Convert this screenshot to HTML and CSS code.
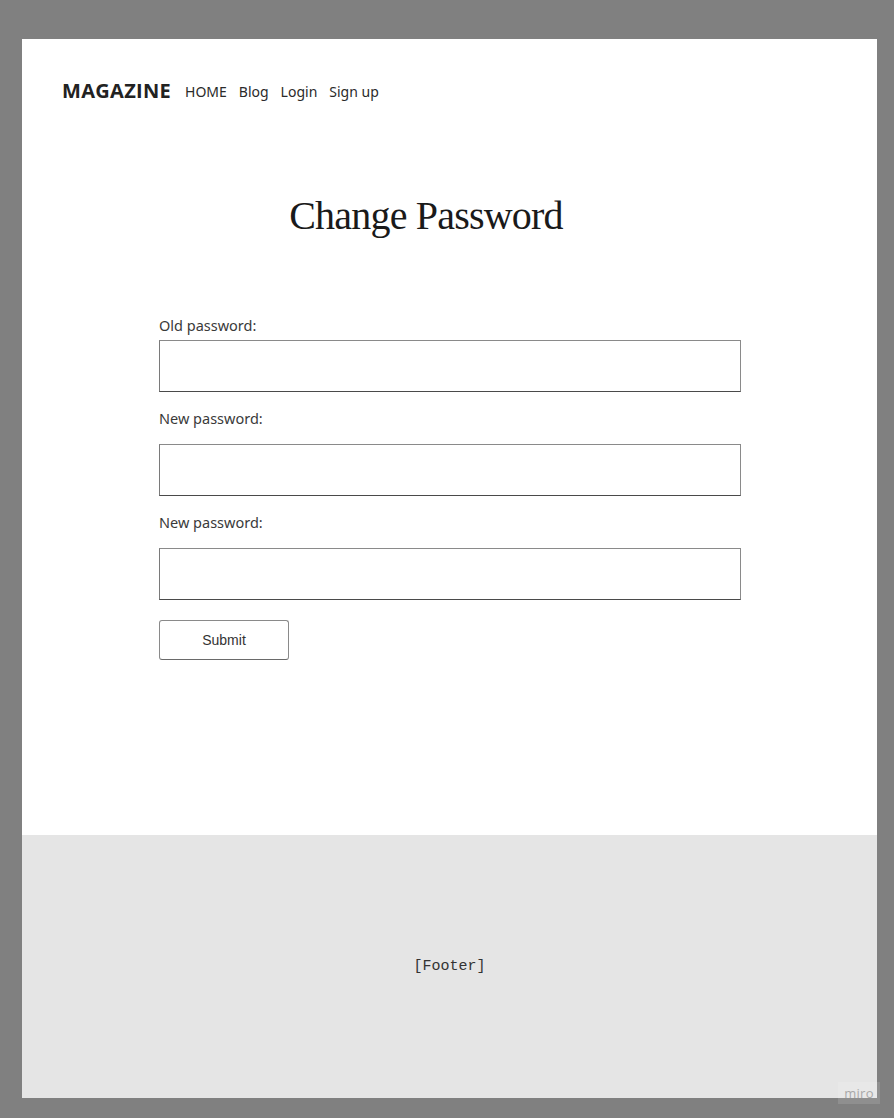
FILE: index.html
```html
<!DOCTYPE html>
<html lang="en">
<head>
<meta charset="utf-8">
<title>Change Password</title>
<link rel="stylesheet" href="styles.css">
</head>
<body>
<div class="frame">
  <div class="page">
    <header class="header">
      <span class="brand">MAGAZINE</span>
      <nav class="nav">
        <a href="#">HOME</a>
        <a href="#">Blog</a>
        <a href="#">Login</a>
        <a href="#">Sign up</a>
      </nav>
    </header>
    <main class="main">
      <h1 class="title">Change Password</h1>
      <form class="form">
        <label class="label label-first">Old password:</label>
        <input class="field" type="password">
        <label class="label">New password:</label>
        <input class="field" type="password">
        <label class="label">New password:</label>
        <input class="field" type="password">
        <button class="submit" type="button">Submit</button>
      </form>
    </main>
    <footer class="footer">[Footer]</footer>
  </div>
  <div class="miro">miro</div>
</div>
</body>
</html>
```
FILE: styles.css
```css
html, body {
  margin: 0;
  padding: 0;
}
body {
  background: #808080;
  height: 1118px;
  overflow: hidden;
}
.frame {
  position: relative;
  height: 1118px;
  padding: 39px 17px 0 22px;
  box-sizing: border-box;
}
.page {
  background: #ffffff;
  height: 1059px;
  display: flex;
  flex-direction: column;
}
.header {
  display: flex;
  align-items: center;
  padding: 40px 0 0 40px;
  height: 24px;
  box-sizing: content-box;
}
.brand {
  font-family: "Open Sans", sans-serif;
  font-weight: 700;
  font-size: 20px;
  letter-spacing: 0.3px;
  color: #222;
  line-height: 24px;
}
.nav {
  display: flex;
  gap: 12px;
  margin-left: 14px;
  padding-top: 1px;
}
.nav a {
  font-family: "Noto Sans", sans-serif;
  font-size: 14px;
  color: #2a2a2a;
  text-decoration: none;
  line-height: 24px;
}
.main {
  flex: 1;
  display: flex;
  flex-direction: column;
}
.title {
  margin: 89px 0 0 0;
  padding-right: 47px;
  text-align: center;
  font-family: "Liberation Serif", "Times New Roman", serif;
  font-weight: 400;
  font-size: 40px;
  line-height: 48px;
  letter-spacing: -0.8px;
  color: #1a1a1a;
}
.form {
  display: flex;
  flex-direction: column;
  align-items: flex-start;
  margin: 75px 0 0 137px;
  width: 582px;
}
.label {
  font-family: "Noto Sans", sans-serif;
  font-size: 14.5px;
  line-height: 20px;
  color: #3a3a3a;
  margin: 16px 0 16px 0;
}
.label-first {
  margin: 0 0 5px 0;
}
.field {
  width: 582px;
  height: 52px;
  box-sizing: border-box;
  margin: 0;
  padding: 0 8px;
  border: 1px solid #8a8a8a;
  border-bottom-color: #4a4a4a;
  border-left-color: #7a7a7a;
  border-right-color: #8a8a8a;
  background: #fff;
  outline: none;
}
.submit {
  margin-top: 20px;
  width: 130px;
  height: 40px;
  background: #fff;
  border: 1px solid #8a8a8a;
  border-bottom-color: #6a6a6a;
  border-radius: 3px;
  font-family: "Liberation Sans", Arial, sans-serif;
  font-size: 14px;
  color: #333;
  padding: 0;
}
.footer {
  height: 263px;
  background: #e5e5e5;
  display: flex;
  align-items: center;
  justify-content: center;
  font-family: "Liberation Mono", "Courier New", monospace;
  font-size: 15px;
  color: #333;
  padding-bottom: 0;
  box-sizing: border-box;
}
.miro {
  position: absolute;
  right: 14px;
  bottom: 14px;
  width: 42px;
  height: 22px;
  background: rgba(255, 255, 255, 0.12);
  font-family: "Open Sans", sans-serif;
  font-size: 13px;
  line-height: 22px;
  text-align: center;
  color: #a8a8a8;
  letter-spacing: 0.3px;
}
```
